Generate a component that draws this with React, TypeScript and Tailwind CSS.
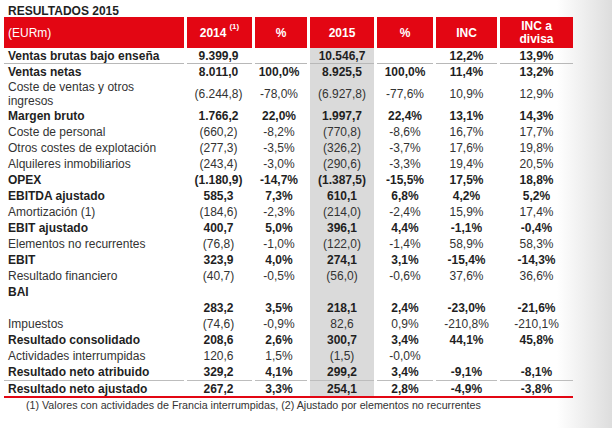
import React from "react";

type Row = {
  label: string;
  bold?: boolean;
  v: [string, string, string, string, string, string];
  h: string;
  borderB?: boolean;
  borderT?: boolean;
  twoLine?: boolean;
};

const rows: Row[] = [
  { label: "Ventas brutas bajo enseña", bold: true, v: ["9.399,9", "", "10.546,7", "", "12,2%", "13,9%"], h: "h-[16px]", borderB: true },
  { label: "Ventas netas", bold: true, v: ["8.011,0", "100,0%", "8.925,5", "100,0%", "11,4%", "13,2%"], h: "h-[15px]" },
  { label: "Coste de ventas y otros ingresos", v: ["(6.244,8)", "-78,0%", "(6.927,8)", "-77,6%", "10,9%", "12,9%"], h: "h-[29px]", twoLine: true },
  { label: "Margen bruto", bold: true, v: ["1.766,2", "22,0%", "1.997,7", "22,4%", "13,1%", "14,3%"], h: "h-[16px]" },
  { label: "Coste de personal", v: ["(660,2)", "-8,2%", "(770,8)", "-8,6%", "16,7%", "17,7%"], h: "h-[16px]" },
  { label: "Otros costes de explotación", v: ["(277,3)", "-3,5%", "(326,2)", "-3,7%", "17,6%", "19,8%"], h: "h-[16px]" },
  { label: "Alquileres inmobiliarios", v: ["(243,4)", "-3,0%", "(290,6)", "-3,3%", "19,4%", "20,5%"], h: "h-[16px]" },
  { label: "OPEX", bold: true, v: ["(1.180,9)", "-14,7%", "(1.387,5)", "-15,5%", "17,5%", "18,8%"], h: "h-[16px]" },
  { label: "EBITDA ajustado", bold: true, v: ["585,3", "7,3%", "610,1", "6,8%", "4,2%", "5,2%"], h: "h-[16px]" },
  { label: "Amortización (1)", v: ["(184,6)", "-2,3%", "(214,0)", "-2,4%", "15,9%", "17,4%"], h: "h-[16px]" },
  { label: "EBIT ajustado", bold: true, v: ["400,7", "5,0%", "396,1", "4,4%", "-1,1%", "-0,4%"], h: "h-[16px]" },
  { label: "Elementos no recurrentes", v: ["(76,8)", "-1,0%", "(122,0)", "-1,4%", "58,9%", "58,3%"], h: "h-[16px]" },
  { label: "EBIT", bold: true, v: ["323,9", "4,0%", "274,1", "3,1%", "-15,4%", "-14,3%"], h: "h-[16px]" },
  { label: "Resultado financiero", v: ["(40,7)", "-0,5%", "(56,0)", "-0,6%", "37,6%", "36,6%"], h: "h-[16px]" },
  { label: "BAI", bold: true, v: ["", "", "", "", "", ""], h: "h-[16px]" },
  { label: "", bold: true, v: ["283,2", "3,5%", "218,1", "2,4%", "-23,0%", "-21,6%"], h: "h-[16px]" },
  { label: "Impuestos", v: ["(74,6)", "-0,9%", "82,6", "0,9%", "-210,8%", "-210,1%"], h: "h-[16px]" },
  { label: "Resultado consolidado", bold: true, v: ["208,6", "2,6%", "300,7", "3,4%", "44,1%", "45,8%"], h: "h-[16px]" },
  { label: "Actividades interrumpidas", v: ["120,6", "1,5%", "(1,5)", "-0,0%", "", ""], h: "h-[16px]" },
  { label: "Resultado neto atribuido", bold: true, v: ["329,2", "4,1%", "299,2", "3,4%", "-9,1%", "-8,1%"], h: "h-[16px]" },
  { label: "Resultado neto ajustado", bold: true, v: ["267,2", "3,3%", "254,1", "2,8%", "-4,9%", "-3,8%"], h: "h-[16px]", borderT: true },
];

function Cells({ r }: { r: Row }) {
  const weight = r.bold ? "font-bold text-[#1f1f1f]" : "font-normal text-[#333333]";
  const line = r.borderB ? "border-b border-[#b8b8b8]" : r.borderT ? "border-t border-[#bdbdbd]" : "";
  return (
    <>
      <div className={`${r.h} ${line} ${weight} flex items-center pl-[4px] ${r.twoLine ? "leading-[14px]" : "leading-[14px] whitespace-nowrap"}`}>
        {r.twoLine ? <span className="w-[140px]">{r.label}</span> : r.label}
      </div>
      {r.v.map((val, i) => (
        <div
          key={i}
          className={`${r.h} ${line} ${weight} flex items-center justify-center leading-[14px] whitespace-nowrap ${i === 2 ? "bg-[#dadada]" : ""} ${i === 0 ? "pr-[2px]" : ""} ${i === 1 ? "pr-[4px]" : ""}`}
        >
          {val}
        </div>
      ))}
    </>
  );
}

export default function App() {
  return (
    <div className="w-[612px] h-[428px] overflow-hidden bg-[linear-gradient(90deg,#ffffff_0%,#ffffff_91%,#dddddd_100%)] font-['Liberation_Sans',Arial,sans-serif] text-[12px] text-[#333333]">
      <div className="h-[17px] pl-[8px] pt-[4px] leading-[14px] font-bold text-[#1f1f1f] whitespace-nowrap">
        RESULTADOS 2015
      </div>
      <div className="ml-[4px] w-[569px]">
        <div className="grid grid-cols-[180px_65px_52px_64px_56px_61px_73px] gap-x-[3px] h-[31px] text-white">
          <div className="bg-[#e30613] flex items-center pl-[4px] font-normal leading-[14px]">(EURm)</div>
          <div className="bg-[#e30613] flex items-center justify-center font-bold leading-[14px] whitespace-nowrap">
            2014<span className="relative -top-[6px] ml-[3px] text-[8px] leading-[8px]">(1)</span>
          </div>
          <div className="bg-[#e30613] flex items-center justify-center font-bold leading-[14px]">%</div>
          <div className="bg-[#e30613] flex items-center justify-center font-bold leading-[14px]">2015</div>
          <div className="bg-[#e30613] flex items-center justify-center font-bold leading-[14px]">%</div>
          <div className="bg-[#e30613] flex items-center justify-center font-bold leading-[14px]">INC</div>
          <div className="bg-[#e30613] flex flex-col items-center justify-center font-bold leading-[13px] text-center">
            <span>INC a</span>
            <span>divisa</span>
          </div>
        </div>
        <div className="grid grid-cols-[180px_65px_52px_64px_56px_61px_73px] gap-x-[3px]">
          {rows.map((r, idx) => (
            <Cells key={idx} r={r} />
          ))}
        </div>
        <div className="h-[2px] bg-[#e30613]" />
      </div>
      <div className="pl-[26px] pt-[1px] text-[10.7px] leading-[12px] text-[#333333] whitespace-nowrap">
        (1) Valores con actividades de Francia interrumpidas, (2) Ajustado por elementos no recurrentes
      </div>
    </div>
  );
}
